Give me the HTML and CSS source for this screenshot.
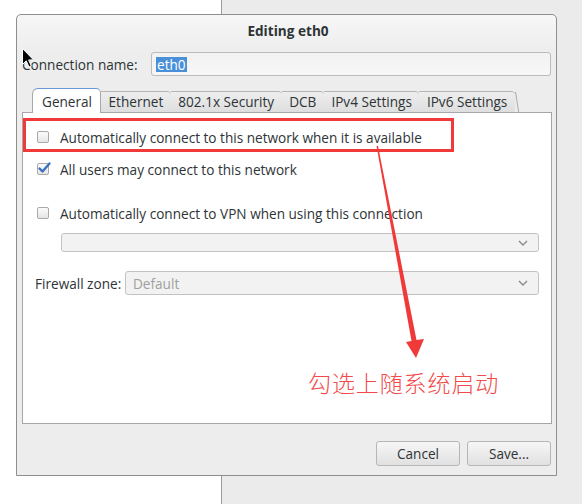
FILE: index.html
```html
<!DOCTYPE html>
<html>
<head>
<meta charset="utf-8">
<link rel="stylesheet" href="styles.css">
</head>
<body>
<div class="dialog">
  <div class="titlebar">Editing eth0</div>
  <div class="name-row">
    <span class="label">Connection name:</span>
    <div class="entry"><span class="sel">eth0</span></div>
  </div>
  <div class="tabs">
    <div class="tab active">General</div>
    <div class="tab">Ethernet</div>
    <div class="tab">802.1x Security</div>
    <div class="tab">DCB</div>
    <div class="tab">IPv4 Settings</div>
    <div class="tab">IPv6 Settings</div>
  </div>
  <div class="panel">
    <div class="check-row r1"><span class="box"></span><span>Automatically connect to this network when it is available</span></div>
    <div class="check-row r2"><span class="box checked"><svg class="tick" width="16" height="14" viewBox="0 0 16 14"><path d="M2.5 7.5 L5.5 10.5 L12.5 2.5" fill="none" stroke="#3d6fc0" stroke-width="2.4" stroke-linecap="round" stroke-linejoin="round"/></svg></span><span>All users may connect to this network</span></div>
    <div class="check-row r3"><span class="box"></span><span>Automatically connect to VPN when using this connection</span></div>
    <div class="combo wide"><span></span><svg class="chev" width="10" height="6" viewBox="0 0 10 6"><path d="M1 1 L5 5 L9 1" fill="none" stroke="#8a8a8a" stroke-width="1.4"/></svg></div>
    <div class="fw-row">
      <span class="label">Firewall zone:</span>
      <div class="combo fw"><span class="ph">Default</span><svg class="chev" width="10" height="6" viewBox="0 0 10 6"><path d="M1 1 L5 5 L9 1" fill="none" stroke="#8a8a8a" stroke-width="1.4"/></svg></div>
    </div>
  </div>
  <div class="buttons">
    <div class="btn">Cancel</div>
    <div class="btn">Save...</div>
  </div>
</div>

<div class="redbox"></div>
<svg class="arrow" width="582" height="504" viewBox="0 0 582 504">
  <polygon points="376.5,146 378,146 416.5,340 424,339 416,358 406,342 411.5,341" fill="#f03a3a"/>
</svg>
<div class="note">勾选上随系统启动</div>
<svg class="cursor" width="14" height="22" viewBox="0 0 14 22">
  <path d="M0.5 0.5 L0.5 16.5 L4.2 12.8 L7 19 L9.3 18 L6.6 11.9 L11.5 11.9 Z" fill="#000" stroke="#fff" stroke-width="1"/>
</svg>
</body>
</html>
```

FILE: styles.css
```css
html, body {
  margin: 0;
  padding: 0;
}
body {
  width: 582px;
  height: 504px;
  overflow: hidden;
  position: relative;
  font-family: "Open Sans", "Noto Sans", sans-serif;
  font-size: 13.6px;
  color: #2e3436;
  background: linear-gradient(to right, #ffffff 0, #ffffff 221px, #9c9c9c 221px, #9c9c9c 222px, #ebebeb 222px);
}
.dialog {
  position: relative;
  margin: 14px 0 0 16px;
  width: 541px;
  height: 462px;
  box-sizing: border-box;
  border: 1px solid #8e8e8e;
  border-radius: 5px 5px 0 0;
  background: linear-gradient(to bottom, #f6f6f6 0, #ededed 40px, #ededed 100%);
  display: flex;
  flex-direction: column;
  padding: 0 4px 0 5px;
}
.titlebar {
  height: 32px;
  line-height: 32px;
  text-align: center;
  font-weight: bold;
  color: #2e3436;
  padding-left: 2px;
}
.name-row {
  margin-top: 5px;
  height: 24px;
  display: flex;
  align-items: center;
}
.name-row .label {
  width: 129px;
  flex: none;
}
.entry {
  flex: 1;
  height: 24px;
  margin-right: 1px;
  box-sizing: border-box;
  border: 1px solid #bcbcbc;
  border-radius: 3px;
  background: linear-gradient(to bottom, #f2f2f2, #f7f7f7);
  display: flex;
  align-items: center;
  padding-left: 4px;
}
.sel {
  background: #4a90d9;
  color: #fff;
  line-height: 15px;
  padding: 0 1px;
}
.tabs {
  margin-top: 12px;
  height: 25px;
  margin-bottom: -1px;
  padding-left: 10px;
  display: flex;
  align-items: flex-end;
  position: relative;
  z-index: 2;
}
.tab {
  position: relative;
  height: 21px;
  margin-bottom: 1px;
  box-sizing: border-box;
  padding: 0 7.5px 0 7.5px;
  line-height: 20px;
  border-top: 1px solid #b5b5b5;
  border-radius: 0 4px 0 0;
  background: linear-gradient(to bottom, #eeeeee, #dedede);
  color: #2e3436;
  white-space: nowrap;
}
.tab::after {
  content: "";
  position: absolute;
  right: -1px;
  top: 0;
  bottom: 0;
  width: 1px;
  background: #a9a9a9;
  transform: skewX(9deg);
  transform-origin: top;
}
.tab.active {
  height: 25px;
  margin-bottom: 0;
  padding: 0 8px 0 9px;
  line-height: 25px;
  background: #ffffff;
  border: 1px solid #a8a8a8;
  border-top: 1.5px solid #6a9ad8;
  border-bottom: none;
  border-radius: 6px 5px 0 0;
}
.tab.active::after {
  display: none;
}
.panel {
  height: 312px;
  box-sizing: border-box;
  border: 1px solid #a6a6a6;
  background: #ffffff;
  padding: 12px 12px 0 14px;
  display: flex;
  flex-direction: column;
}
.check-row {
  height: 24px;
  display: flex;
  align-items: center;
}
.r2 { margin-top: 8px; }
.r3 { margin-top: 20px; }
.box {
  position: relative;
  width: 12px;
  height: 12px;
  box-sizing: border-box;
  border: 1px solid #a9a9a9;
  border-radius: 2px;
  background: linear-gradient(to bottom, #fbfbfb, #e6e6e6);
  margin-right: 11px;
  flex: none;
}
.tick {
  position: absolute;
  left: -1px;
  top: -3px;
}
.combo {
  box-sizing: border-box;
  border: 1px solid #c2c2c2;
  border-radius: 3px;
  background: #f2f2f2;
  display: flex;
  align-items: center;
  justify-content: space-between;
  padding: 0 10px 0 7px;
}
.combo.wide {
  margin-top: 8px;
  margin-left: 24px;
  height: 19px;
}
.fw-row {
  margin-top: 19px;
  height: 24px;
  display: flex;
  align-items: center;
  margin-left: -2px;
}
.fw-row .label {
  width: 90px;
  flex: none;
}
.combo.fw {
  flex: 1;
  height: 24px;
}
.ph {
  color: #a0a0a0;
}
.buttons {
  margin-top: 17px;
  height: 25px;
  display: flex;
  justify-content: flex-end;
  gap: 7px;
  padding-right: 1px;
}
.btn {
  width: 84px;
  height: 25px;
  box-sizing: border-box;
  border: 1px solid #b6b6b6;
  border-radius: 3px;
  background: linear-gradient(to bottom, #f6f6f6, #e1e1e1);
  text-align: center;
  line-height: 23px;
  color: #2e3436;
}
.redbox {
  position: absolute;
  left: 23px;
  top: 118px;
  width: 431px;
  height: 34px;
  box-sizing: border-box;
  border: 3px solid #f03a3a;
}
.arrow {
  position: absolute;
  left: 0;
  top: 0;
}
.note {
  position: absolute;
  left: 308px;
  top: 366px;
  font-family: "Noto Sans CJK SC", sans-serif;
  font-size: 23px;
  line-height: 32px;
  font-weight: 300;
  color: #f24a4a;
  letter-spacing: 0.9px;
}
.cursor {
  position: absolute;
  left: 22px;
  top: 48px;
}
```
